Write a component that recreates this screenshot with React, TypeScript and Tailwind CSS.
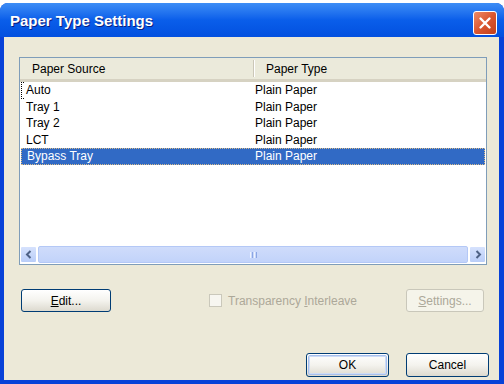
import React from "react";

const rows = [
  { source: "Auto", type: "Plain Paper" },
  { source: "Tray 1", type: "Plain Paper" },
  { source: "Tray 2", type: "Plain Paper" },
  { source: "LCT", type: "Plain Paper" },
  { source: "Bypass Tray", type: "Plain Paper" },
];

function XpButton({
  children,
  width,
  disabled,
  isDefault,
}: {
  children: React.ReactNode;
  width: string;
  disabled?: boolean;
  isDefault?: boolean;
}) {
  if (disabled) {
    return (
      <div
        className={`${width} h-full flex items-center justify-center rounded-[3px] border border-[#C9C7BA] bg-[#F5F4EA] text-[#ACA899]`}
      >
        {children}
      </div>
    );
  }
  return (
    <div
      className={`${width} h-full rounded-[3px] border border-[#003C74] bg-gradient-to-b from-white via-[#F4F3EE] to-[#DDDACF] p-px`}
    >
      <div
        className={`h-full flex items-center justify-center rounded-[2px] text-black ${
          isDefault ? "border border-[#A7C0EE] shadow-[inset_0_0_0_1px_#CEDCF5]" : ""
        }`}
      >
        {children}
      </div>
    </div>
  );
}

function ScrollArrow({ dir }: { dir: "left" | "right" }) {
  return (
    <div className="w-[17px] h-[17px] rounded-[2px] border border-white bg-gradient-to-b from-[#D6E2FD] to-[#B9CDF8] flex items-center justify-center">
      <svg width="8" height="9" viewBox="0 0 8 9">
        <path
          d={dir === "left" ? "M5.5 1 L2 4.5 L5.5 8" : "M2.5 1 L6 4.5 L2.5 8"}
          fill="none"
          stroke="#4D6185"
          strokeWidth="2"
        />
      </svg>
    </div>
  );
}

export default function App() {
  return (
    <div className="w-[504px] h-[384px] bg-white pt-[3px] font-['Liberation_Sans',Arial,sans-serif] text-[12px]">
      <div className="h-full flex flex-col rounded-t-[8px] bg-[#0842D8] overflow-hidden">
        {/* Title bar */}
        <div className="h-[34px] shrink-0 flex items-center justify-between pl-[10px] pr-[7px] bg-gradient-to-b from-[#3D8DF5] via-[#0A5EEA] to-[#0350DF]">
          <span className="text-white font-bold text-[15px] mt-[2px] [text-shadow:1px_1px_0_#0A1E80]">
            Paper Type Settings
          </span>
          <div className="w-[24px] h-[24px] mt-[6px] rounded-[3px] border border-white bg-gradient-to-br from-[#EE8A66] via-[#DA5630] to-[#C2401C] flex items-center justify-center">
            <svg width="14" height="14" viewBox="0 0 14 14">
              <path d="M2.5 2.5 L11.5 11.5 M11.5 2.5 L2.5 11.5" stroke="white" strokeWidth="2.4" strokeLinecap="round" />
            </svg>
          </div>
        </div>

        {/* Client area */}
        <div className="flex-1 ml-[4px] mr-[5px] mb-[4px] bg-[#ECE9D8] flex flex-col">
          {/* List view */}
          <div className="ml-[15px] mt-[20px] w-[468px] h-[208px] border border-[#7F9DB9] bg-white flex flex-col">
            <div className="h-[24px] shrink-0 flex items-center bg-[#EBEADB] border-b-[3px] border-[#D6D2C2]">
              <div className="w-[233px] pl-[12px] text-black">Paper Source</div>
              <div className="w-[2px] h-[17px] border-l border-[#CBC7B8] bg-white" />
              <div className="pl-[11px] text-black">Paper Type</div>
            </div>
            <div className="flex-1 flex flex-col">
              {rows.map((r, i) => {
                const selected = i === rows.length - 1;
                return (
                  <div
                    key={r.source}
                    className={`relative h-[16.5px] flex items-center ${
                      selected
                        ? "mx-px bg-[#316AC5] text-white border border-dotted border-[#D8BC8A] pl-[5px]"
                        : "text-black pl-[6px]"
                    }`}
                  >
                    {i === 0 && (
                      <span className="absolute left-px top-0 bottom-0 w-[3px] border-l border-y border-dotted border-black" />
                    )}
                    <span className={selected ? "w-[228px]" : "w-[229px]"}>{r.source}</span>
                    <span>{r.type}</span>
                  </div>
                );
              })}
            </div>
            {/* Horizontal scroll bar */}
            <div className="h-[17px] mb-px shrink-0 flex">
              <ScrollArrow dir="left" />
              <div className="flex-1 mx-px rounded-[2px] border border-[#B4C8F6] bg-gradient-to-b from-[#CFDCFB] to-[#C2D3FA] flex items-center justify-center">
                <div className="flex gap-[1px]">
                  <span className="w-px h-[6px] bg-[#EEF3FE]" />
                  <span className="w-px h-[6px] bg-[#8CA6E3]" />
                  <span className="w-px h-[6px] bg-[#EEF3FE]" />
                  <span className="w-px h-[6px] bg-[#8CA6E3]" />
                </div>
              </div>
              <ScrollArrow dir="right" />
            </div>
          </div>

          {/* Edit / checkbox / settings row */}
          <div className="mt-[24px] h-[23px] flex items-center">
            <div className="ml-[17px] h-full">
              <XpButton width="w-[90px]">
                <span>
                  <span className="underline">E</span>dit...
                </span>
              </XpButton>
            </div>
            <div className="ml-[98px] flex items-center">
              <span className="w-[13px] h-[13px] border border-[#CAC8BB] bg-[#F7F6F0]" />
              <span className="ml-[6px] text-[#ACA899]">
                Transparency <span className="underline">I</span>nterleave
              </span>
            </div>
            <div className="ml-auto mr-[15px] h-full">
              <XpButton width="w-[78px]" disabled>
                <span>
                  <span className="underline">S</span>ettings...
                </span>
              </XpButton>
            </div>
          </div>

          {/* OK / Cancel */}
          <div className="mt-[41px] h-[24px] flex justify-end gap-[17px] mr-[10px]">
            <XpButton width="w-[83px]" isDefault>
              OK
            </XpButton>
            <XpButton width="w-[83px]">Cancel</XpButton>
          </div>
        </div>
      </div>
    </div>
  );
}
